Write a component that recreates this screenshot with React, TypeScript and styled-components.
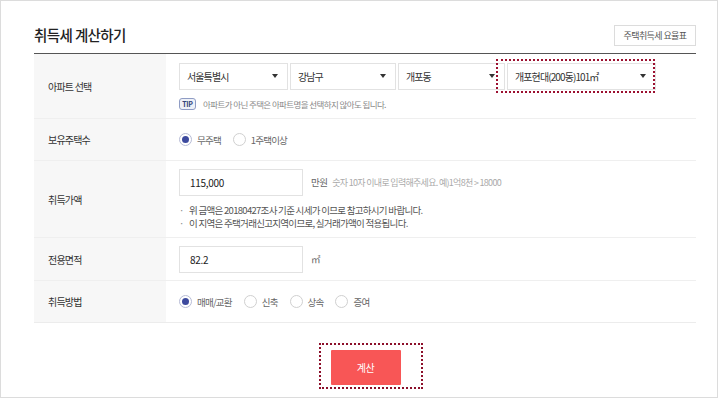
import styled, { createGlobalStyle } from "styled-components";

const GlobalStyle = createGlobalStyle`
  body {
    margin: 0;
    background: #fff;
    font-family: "Noto Sans CJK KR", "Noto Sans", sans-serif;
    color: #333;
  }
`;

interface SelectProps {
  value: string;
  width: number;
}

function Select({ value, width }: SelectProps) {
  return (
    <SelectBox $w={width}>
      <span>{value}</span>
      <Caret />
    </SelectBox>
  );
}

function Radio({ label, checked }: { label: string; checked?: boolean }) {
  return (
    <RadioItem>
      <RadioMark $on={!!checked} />
      <RadioLabel>{label}</RadioLabel>
    </RadioItem>
  );
}

export default function App() {
  return (
    <>
      <GlobalStyle />
      <Frame>
        <Header>
          <Title>취득세 계산하기</Title>
          <RateButton>주택취득세 요율표</RateButton>
        </Header>

        <Table>
          <Row $h={64}>
            <Label>아파트 선택</Label>
            <Field>
              <SelectRow>
                <Select value="서울특별시" width={109} />
                <Select value="강남구" width={106} />
                <Select value="개포동" width={107} />
                <Highlight>
                  <Select value="개포현대(200동)101㎡" width={149} />
                  <DottedSelect />
                </Highlight>
              </SelectRow>
              <TipRow>
                <TipBadge>TIP</TipBadge>
                <TipText>아파트가 아닌 주택은 아파트명을 선택하지 않아도 됩니다.</TipText>
              </TipRow>
            </Field>
          </Row>

          <Row $h={41}>
            <Label>보유주택수</Label>
            <Field>
              <RadioGroup>
                <Radio label="무주택" checked />
                <Radio label="1주택이상" />
              </RadioGroup>
            </Field>
          </Row>

          <Row $h={76}>
            <Label>취득가액</Label>
            <Field>
              <InputRow>
                <TextInput>115,000</TextInput>
                <Unit>만원</Unit>
                <Hint>숫자 10자 이내로 입력해주세요. 예)1억8천 &gt; 18000</Hint>
              </InputRow>
              <Notes>
                <li>위 금액은 20180427조사 기준 시세가 이므로 참고하시기 바랍니다.</li>
                <li>이 지역은 주택거래신고지역이므로, 실거래가액이 적용됩니다.</li>
              </Notes>
            </Field>
          </Row>

          <Row $h={42}>
            <Label>전용면적</Label>
            <Field>
              <InputRow>
                <TextInput>82.2</TextInput>
                <Unit>㎡</Unit>
              </InputRow>
            </Field>
          </Row>

          <Row $h={41}>
            <Label>취득방법</Label>
            <Field>
              <RadioGroup>
                <Radio label="매매/교환" checked />
                <Radio label="신축" />
                <Radio label="상속" />
                <Radio label="증여" />
              </RadioGroup>
            </Field>
          </Row>
        </Table>

        <Actions>
          <ButtonWrap>
            <CalcButton>계산</CalcButton>
            <DottedButton />
          </ButtonWrap>
        </Actions>
      </Frame>
    </>
  );
}

// 스타일

const Frame = styled.div`
  width: 718px;
  height: 398px;
  box-sizing: border-box;
  border: 1px solid #dcdcdc;
  padding: 0 21px 0 33px;
`;

const Header = styled.div`
  height: 52px;
  display: flex;
  justify-content: space-between;
  align-items: flex-end;
  padding-bottom: 7px;
  box-sizing: border-box;
`;

const Title = styled.h1`
  margin: 0;
  font-size: 14.5px;
  font-weight: 500;
  letter-spacing: -0.6px;
  color: #222;
  line-height: 20px;
  padding-bottom: 1px;
`;

const RateButton = styled.button`
  width: 82px;
  height: 21px;
  padding: 0;
  border: 1px solid #dcdcdc;
  background: #fff;
  font-family: inherit;
  font-size: 9px;
  letter-spacing: -0.6px;
  color: #555;
`;

const Table = styled.div`
  border-top: 1px solid #555;
  border-bottom: 1px solid #ececec;
`;

const Row = styled.div<{ $h: number }>`
  display: grid;
  grid-template-columns: 132px 1fr;
  height: ${(p) => p.$h}px;
  & + & {
    border-top: 1px solid #efefef;
  }
`;

const Label = styled.div`
  background: #f7f7f7;
  display: flex;
  align-items: center;
  padding-left: 14px;
  font-size: 10px;
  letter-spacing: -0.8px;
  color: #333;
`;

const Field = styled.div`
  display: flex;
  flex-direction: column;
  justify-content: center;
  padding-left: 13px;
`;

const SelectRow = styled.div`
  display: flex;
  gap: 2px;
`;

const SelectBox = styled.div<{ $w: number }>`
  width: ${(p) => p.$w}px;
  height: 27px;
  box-sizing: border-box;
  border: 1px solid #e2e2e2;
  background: #fff;
  display: flex;
  align-items: center;
  justify-content: space-between;
  padding: 0 9px 0 7px;
  font-size: 10px;
  letter-spacing: -0.9px;
  color: #333;
`;

const Caret = styled.i`
  width: 0;
  height: 0;
  border-left: 3.5px solid transparent;
  border-right: 3.5px solid transparent;
  border-top: 4px solid #333;
`;

const Highlight = styled.div`
  position: relative;
`;

const DottedSelect = styled.div`
  position: absolute;
  left: -11px;
  right: 1px;
  top: -4px;
  bottom: -3px;
  border: 2px dotted #9c1030;
  pointer-events: none;
`;

const TipRow = styled.div`
  display: flex;
  align-items: center;
  gap: 7px;
  margin-top: 8px;
`;

const TipBadge = styled.span`
  width: 17px;
  height: 12px;
  box-sizing: border-box;
  border: 1px solid #8f9cc4;
  border-radius: 3px;
  background: #eef1f8;
  color: #34457a;
  font-size: 7px;
  font-weight: 700;
  display: flex;
  align-items: center;
  justify-content: center;
  letter-spacing: -0.3px;
`;

const TipText = styled.span`
  font-size: 8.5px;
  letter-spacing: -0.6px;
  color: #888;
`;

const RadioGroup = styled.div`
  display: flex;
  align-items: center;
  gap: 12px;
`;

const RadioItem = styled.label`
  display: flex;
  align-items: center;
  gap: 5px;
`;

const RadioMark = styled.span<{ $on: boolean }>`
  width: 13px;
  height: 13px;
  box-sizing: border-box;
  border-radius: 50%;
  border: 1px solid ${(p) => (p.$on ? "#b7bcd6" : "#d0d0d0")};
  background: #fff;
  display: flex;
  align-items: center;
  justify-content: center;
  &::after {
    content: "";
    width: 7px;
    height: 7px;
    border-radius: 50%;
    background: ${(p) => (p.$on ? "#3d4a9e" : "transparent")};
  }
`;

const RadioLabel = styled.span`
  font-size: 9.5px;
  letter-spacing: -0.8px;
  color: #666;
`;

const InputRow = styled.div`
  display: flex;
  align-items: center;
`;

const TextInput = styled.div`
  width: 124px;
  height: 27px;
  box-sizing: border-box;
  border: 1px solid #e2e2e2;
  display: flex;
  align-items: center;
  padding-left: 10px;
  font-size: 10px;
  color: #222;
  letter-spacing: -0.3px;
`;

const Unit = styled.span`
  margin-left: 8px;
  font-size: 9.5px;
  letter-spacing: -0.6px;
  color: #666;
`;

const Hint = styled.span`
  margin-left: 5px;
  font-size: 9px;
  letter-spacing: -0.7px;
  color: #aaa;
`;

const Notes = styled.ul`
  list-style: none;
  margin: 8px 0 0;
  padding: 0;
  li {
    position: relative;
    padding-left: 10px;
    font-size: 9.5px;
    line-height: 13px;
    letter-spacing: -0.7px;
    color: #555;
  }
  li::before {
    content: "·";
    position: absolute;
    left: 0;
    color: #888;
  }
`;

const Actions = styled.div`
  display: flex;
  justify-content: center;
  padding-top: 27px;
  padding-left: 1px;
`;

const ButtonWrap = styled.div`
  position: relative;
`;

const CalcButton = styled.button`
  width: 70px;
  height: 35px;
  border: 0;
  border-radius: 1px;
  background: #f85656;
  color: #fff;
  font-family: inherit;
  font-size: 10px;
  letter-spacing: -0.5px;
`;

const DottedButton = styled.div`
  position: absolute;
  left: -12px;
  right: -22px;
  top: -7px;
  bottom: -4px;
  border: 2px dotted #8c0f2a;
  pointer-events: none;
`;
